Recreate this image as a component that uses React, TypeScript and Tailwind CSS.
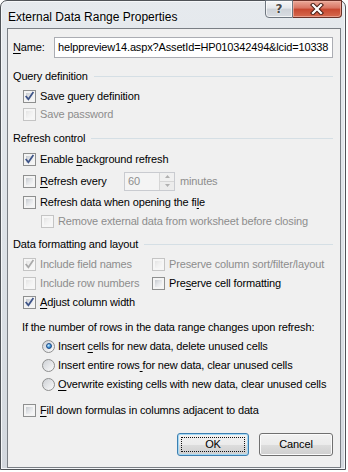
import React from 'react';

const Acc: React.FC<{ text: string; k: number }> = ({ text, k }) => (
  <span>
    {text.slice(0, k)}
    <span className="underline underline-offset-[2px] decoration-[1px]">{text[k]}</span>
    {text.slice(k + 1)}
  </span>
);

const CheckBox: React.FC<{ checked?: boolean; disabled?: boolean }> = ({ checked, disabled }) => (
  <div
    className={`relative w-[13px] h-[13px] shrink-0 border p-[2px] ${
      disabled ? 'border-[#c4c4c4] bg-[#f6f6f6]' : 'border-[#8e8f8f] bg-[#f4f4f4]'
    }`}
  >
    <div
      className={`w-full h-full ${
        disabled
          ? 'bg-gradient-to-br from-[#e4e4e4] via-[#f1f1f1] to-[#f8f8f8]'
          : 'bg-gradient-to-br from-[#c6cacf] via-[#e4e6e9] to-[#f8f8f8]'
      }`}
    />
    {checked && (
      <svg className="absolute left-0 top-0" width="11" height="11" viewBox="0 0 11 11">
        <path
          d="M2.2 5.6 L4.4 8.3 L8.9 1.8"
          fill="none"
          stroke={disabled ? '#a9a9a9' : '#3e5488'}
          strokeWidth="1.7"
          strokeLinecap="square"
        />
      </svg>
    )}
  </div>
);

const Radio: React.FC<{ selected?: boolean }> = ({ selected }) => (
  <div className="w-[13px] h-[13px] shrink-0 rounded-full border border-[#8e8f8f] bg-gradient-to-br from-[#cdd0d5] to-[#fbfbfb] flex items-center justify-center">
    {selected && (
      <div className="w-[6px] h-[6px] rounded-full border border-[#1c4a86] bg-[radial-gradient(circle_at_35%_35%,#c6ecff,#3b8fd6_60%,#1b5aa3)]" />
    )}
  </div>
);

const GroupHeader: React.FC<{ label: string; mt: string }> = ({ label, mt }) => (
  <div className={`flex items-center h-[18px] pl-[5px] ${mt}`}>
    <span>{label}</span>
    <div className="flex-1 ml-[6px] h-px bg-[#d5dfe5]" />
  </div>
);

const CheckRow: React.FC<{
  children: React.ReactNode;
  checked?: boolean;
  disabled?: boolean;
  className?: string;
}> = ({ children, checked, disabled, className }) => (
  <div className={`flex items-center h-[18px] gap-[4px] ${className ?? ''}`}>
    <CheckBox checked={checked} disabled={disabled} />
    <span className={disabled ? 'text-[#8d8d8d]' : ''}>{children}</span>
  </div>
);

const RadioRow: React.FC<{ children: React.ReactNode; selected?: boolean; className?: string }> = ({
  children,
  selected,
  className,
}) => (
  <div className={`flex items-center h-[18px] gap-[3px] pl-[34px] ${className ?? ''}`}>
    <Radio selected={selected} />
    <span>{children}</span>
  </div>
);

const Spinner: React.FC = () => (
  <div className="flex h-[19px] w-[51px] border border-[#c9cbd0] bg-[#f4f4f4]">
    <div className="flex-1 flex items-center pl-[3px] text-[#8d8d8d]">60</div>
    <div className="w-[15px] flex flex-col border-l border-[#d6d6d6]">
      <div className="flex-1 flex items-center justify-center border-b border-[#d6d6d6] bg-[#f0f0f0]">
        <svg width="5" height="3" viewBox="0 0 5 3">
          <path d="M0 3 L2.5 0 L5 3 Z" fill="#b0b0b0" />
        </svg>
      </div>
      <div className="flex-1 flex items-center justify-center bg-[#ececec]">
        <svg width="5" height="3" viewBox="0 0 5 3">
          <path d="M0 0 L2.5 3 L5 0 Z" fill="#b0b0b0" />
        </svg>
      </div>
    </div>
  </div>
);

const DialogButton: React.FC<{ label: React.ReactNode; isDefault?: boolean; width: string }> = ({
  label,
  isDefault,
  width,
}) => (
  <div
    className={`relative h-[23px] ${width} rounded-[3px] border flex items-center justify-center bg-[linear-gradient(#f2f2f2,#ebebeb_50%,#dddddd_50%,#cfcfcf)] ${
      isDefault
        ? 'border-[#3c7fb1] shadow-[inset_0_0_0_1px_#a6d9f4]'
        : 'border-[#707070] shadow-[inset_0_0_0_1px_#fbfbfb]'
    }`}
  >
    {isDefault && <div className="absolute inset-[3px] border border-dotted border-[#111]" />}
    <span className="relative">{label}</span>
  </div>
);

export default function App() {
  return (
    <div className="w-[348px] h-[472px] bg-white font-['Liberation_Sans',Arial,sans-serif] text-[11px] tracking-[-0.15px] whitespace-nowrap text-black">
      {/* Window frame */}
      <div className="w-[346px] h-[470px] rounded-t-[7px] border border-[#4f5358] bg-gradient-to-b from-[#e6eaee] via-[#dde2e7] to-[#d3d8de] shadow-[inset_0_0_0_1px_#f5f7f9] flex flex-col">
        {/* Title bar */}
        <div className="flex h-[27px] shrink-0">
          <span className="pl-[7px] pt-[7px] text-[12px] tracking-normal text-black [text-shadow:0_0_4px_#fff]">
            External Data Range Properties
          </span>
          <div className="ml-auto mr-[3px] flex h-[18px] -mt-px">
            <div className="w-[28px] h-full border border-[#6f7780] rounded-bl-[4px] bg-[linear-gradient(#f6f7f8,#e4e7eb_45%,#cdd2d8_50%,#d9dde2)] shadow-[inset_0_0_0_1px_#ffffffaa] flex items-center justify-center">
              <span className="font-['DejaVu_Sans',sans-serif] font-bold text-[12px] leading-none text-[#4a4a4a] [text-shadow:0_0_2px_#fff,0_0_1px_#fff]">
                ?
              </span>
            </div>
            <div className="w-[49px] h-full border border-l-0 border-[#6b3128] rounded-br-[4px] bg-[linear-gradient(#eaa898,#d87462_45%,#c7472f_50%,#d66a4f)] shadow-[inset_0_0_0_1px_#f2b6a8aa] flex items-center justify-center">
              <svg width="14" height="12" viewBox="0 0 14 12">
                <path d="M3 2 L11 10 M11 2 L3 10" stroke="#4a1e16" strokeWidth="4.2" strokeLinecap="square" />
                <path d="M3 2 L11 10 M11 2 L3 10" stroke="#ffffff" strokeWidth="2.2" strokeLinecap="square" />
              </svg>
            </div>
          </div>
        </div>

        {/* Client area */}
        <div className="ml-[6px] w-[334px] h-[440px] border border-[#7a7f85] bg-[#f0f0f0] flex flex-col pr-[7px]">
          {/* Name */}
          <div className="flex items-center mt-[8px] h-[21px]">
            <span className="pl-[5px] w-[46px] shrink-0">
              <Acc text="Name:" k={0} />
            </span>
            <div className="flex-1 min-w-0 h-[21px] border border-[#abadb3] bg-white flex items-center pl-[3px] overflow-hidden">
              helppreview14.aspx?AssetId=HP010342494&amp;lcid=10338
            </div>
          </div>

          <GroupHeader label="Query definition" mt="mt-[9px]" />
          <CheckRow checked className="mt-[2px] pl-[15px]">
            <Acc text="Save query definition" k={5} />
          </CheckRow>
          <CheckRow disabled className="pl-[15px]">
            Save password
          </CheckRow>

          <GroupHeader label="Refresh control" mt="mt-[6px]" />
          <CheckRow checked className="mt-[3px] pl-[15px]">
            <Acc text="Enable background refresh" k={7} />
          </CheckRow>
          <div className="flex items-center h-[18px] mt-[4px] pl-[15px]">
            <CheckBox />
            <span className="ml-[4px] w-[84px]">
              <Acc text="Refresh every" k={0} />
            </span>
            <Spinner />
            <span className="ml-[5px] text-[#8d8d8d]">minutes</span>
          </div>
          <CheckRow className="mt-[3px] pl-[15px]">
            <Acc text="Refresh data when opening the file" k={32} />
          </CheckRow>
          <CheckRow disabled className="mt-[1px] pl-[33px]">
            Remove external data from worksheet before closing
          </CheckRow>

          <GroupHeader label="Data formatting and layout" mt="mt-[5px]" />
          <div className="grid grid-cols-[129px_1fr] mt-[2px] pl-[15px] gap-y-[1px]">
            <CheckRow checked disabled>
              Include field names
            </CheckRow>
            <CheckRow disabled>Preserve column sort/filter/layout</CheckRow>
            <CheckRow disabled>Include row numbers</CheckRow>
            <CheckRow>
              <Acc text="Preserve cell formatting" k={3} />
            </CheckRow>
            <CheckRow checked>
              <Acc text="Adjust column width" k={0} />
            </CheckRow>
          </div>

          <div className="flex items-center h-[18px] mt-[7px] pl-[14px]">
            If the number of rows in the data range changes upon refresh:
          </div>
          <RadioRow selected className="mt-[1px]">
            <Acc text="Insert cells for new data, delete unused cells" k={7} />
          </RadioRow>
          <RadioRow className="mt-[1px]">
            <Acc text="Insert entire rows for new data, clear unused cells" k={18} />
          </RadioRow>
          <RadioRow className="mt-[1px]">
            <Acc text="Overwrite existing cells with new data, clear unused cells" k={0} />
          </RadioRow>

          <CheckRow className="mt-[8px] pl-[15px]">
            <Acc text="Fill down formulas in columns adjacent to data" k={0} />
          </CheckRow>

          <div className="flex justify-end gap-[10px] mt-[14px]">
            <DialogButton label="OK" isDefault width="w-[72px]" />
            <DialogButton label="Cancel" width="w-[74px]" />
          </div>
        </div>
      </div>
    </div>
  );
}
